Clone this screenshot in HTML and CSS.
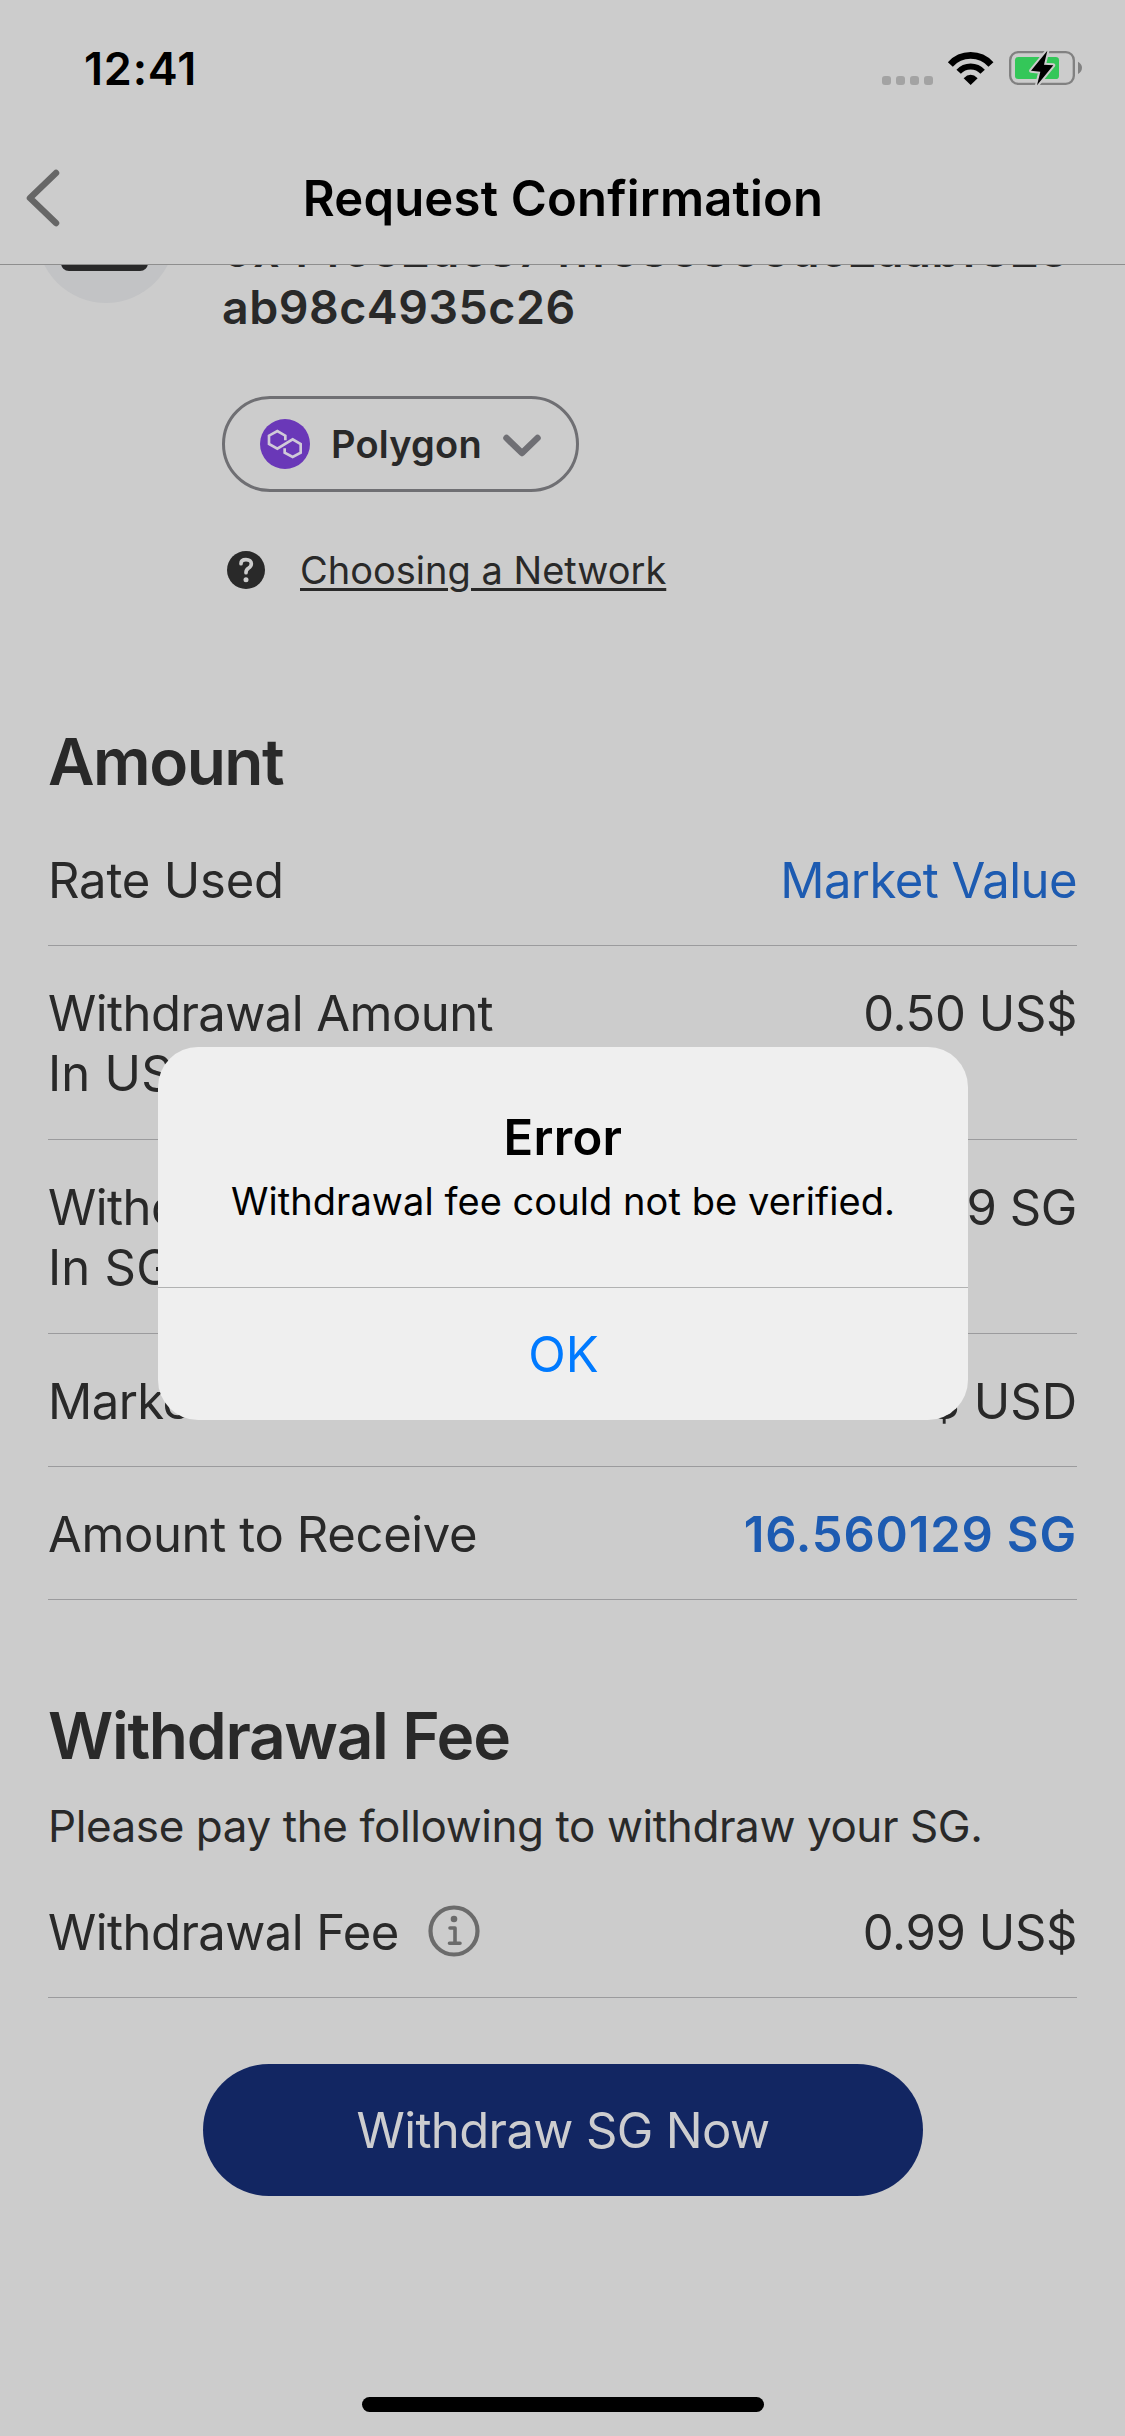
FILE: index.html
```html
<!DOCTYPE html>
<html lang="en">
<head>
<meta charset="utf-8">
<title>Request Confirmation</title>
<link rel="stylesheet" href="styles.css">
</head>
<body>
<div class="screen">
  <header class="header">
    <div class="status">
      <span class="time">12:41</span>
      <div class="status-icons">
        <span class="dots"><i></i><i></i><i></i><i></i></span>
        <svg class="wifi" viewBox="0 0 136 99" fill="none">
          <path d="M7 37.5A82 82 0 0 1 129 37.5" stroke="#000" stroke-width="20"/>
          <path d="M32 59A49 49 0 0 1 104 59" stroke="#000" stroke-width="18"/>
          <path d="M47 79Q68 58 89 79L68 99Z" fill="#000"/>
        </svg>
        <svg class="battery" viewBox="0 0 219 108">
          <rect x="3.5" y="6.5" width="191" height="95" rx="24" fill="none" stroke="#818181" stroke-width="7"/>
          <path d="M207 35Q219 42 219 53.500Q219 65 207 72Z" fill="#818181"/>
          <rect x="18" y="21" width="132" height="66" rx="10" fill="#34c759"/>
          <path d="M115 2L66 62L94 65L84 106L133 46L105 44Z" fill="#000" stroke="#ccc" stroke-width="12" stroke-linejoin="round" paint-order="stroke"/>
        </svg>
      </div>
    </div>
    <div class="navbar">
      <svg class="back" viewBox="0 0 36 60" fill="none" stroke="#666" stroke-width="6.500" stroke-linecap="round" stroke-linejoin="round"><path d="M30 5L4 30L30 55"/></svg>
      <h1 class="title">Request Confirmation</h1>
    </div>
  </header>

  <main class="content">
    <section class="wallet">
      <div class="avatar"><span class="card"></span></div>
      <div class="details">
        <p class="address">0x44c62dc874ff686866dc2aabf823<br>ab98c4935c26</p>
        <button class="network">
          <svg class="polygon" viewBox="0 0 150 150">
            <circle cx="75" cy="75" r="75" fill="#6a38b8"/>
            <path d="M76 64V50L52 36L27 50V75L52 89L98 61L122 75V101L98 114L74 101V88" fill="none" stroke="#d0cad8" stroke-width="8"/>
          </svg>
          <span>Polygon</span>
          <svg class="chevron" viewBox="0 0 38 23" fill="none" stroke="#6f6f74" stroke-width="6.500" stroke-linecap="round" stroke-linejoin="round"><path d="M3.500 4L19 19L34.500 4"/></svg>
        </button>
        <a class="help">
          <svg class="question" viewBox="0 0 114 114" fill="none">
            <circle cx="57" cy="57" r="57" fill="#292929"/>
            <path d="M42 38C42 30 48 26 57 26C67 26 73 31 73 38C73 45 70 48 64 52C59 55 57 58 57 65" stroke="#ccc" stroke-width="11" stroke-linecap="round"/>
            <circle cx="57" cy="86" r="7.500" fill="#ccc"/>
          </svg>
          <span>Choosing a Network</span>
        </a>
      </div>
    </section>

    <h2 class="heading amount">Amount</h2>
    <div class="row"><span class="rate">Rate Used</span><span class="value link">Market Value</span></div>
    <div class="row tall"><span>Withdrawal Amount<br><span class="unit">In US$</span></span><span class="value">0.50 US$</span></div>
    <div class="row tall"><span>Withdrawal Amount<br><span class="unit">In SG</span></span><span class="value">16.560129 SG</span></div>
    <div class="row"><span>Market Value</span><span class="value usd">0.030193 $ USD</span></div>
    <div class="row"><span class="receive">Amount to Receive</span><span class="value total">16.560129 SG</span></div>

    <h2 class="heading fee">Withdrawal Fee</h2>
    <p class="note">Please pay the following to withdraw your SG.</p>
    <div class="row">
      <span class="with-info">Withdrawal Fee
        <svg class="info" viewBox="0 0 52 52" fill="none" stroke="#6b6b6b">
          <circle cx="26" cy="26" r="23.500" stroke-width="4.200"/>
          <circle cx="26" cy="14" r="3.300" fill="#6b6b6b" stroke="none"/>
          <path d="M22 23H27V38M21.500 38.200H32" stroke-width="3.600" stroke-linecap="round" stroke-linejoin="round"/>
        </svg>
      </span>
      <span class="value">0.99 US$</span>
    </div>
    <button class="submit">Withdraw SG Now</button>
  </main>
  <div class="home"></div>

  <div class="alert">
    <h3 class="alert-title">Error</h3>
    <p class="alert-text">Withdrawal fee could not be verified.</p>
    <button class="alert-ok">OK</button>
  </div>
</div>
</body>
</html>
```
FILE: styles.css
```css
* { box-sizing: border-box; margin: 0; padding: 0; }
body { background: #ccc; }
svg { display: block; flex: none; overflow: visible; }
button { border: 0; background: none; color: inherit; font: inherit; letter-spacing: inherit; }

.screen {
  position: relative;
  display: flex;
  flex-direction: column;
  width: 1125px;
  height: 2436px;
  overflow: hidden;
  background: #ccc;
  color: #292929;
  font-family: Inter, "Liberation Sans", sans-serif;
}

/* Status bar and navigation */
.header { flex: none; height: 265px; border-bottom: 1px solid #8e8e8e; color: #000; }
.status { display: flex; justify-content: space-between; height: 132px; padding: 39px 43px 0 84px; }
.time { font-size: 45px; font-weight: 600; line-height: 60px; letter-spacing: 0.800px; }
.status-icons { display: flex; align-items: flex-start; }
.dots { display: flex; gap: 5px; margin-top: 37px; }
.dots i { width: 9px; height: 9px; border-radius: 3px; background: #a3a3a3; }
.wifi { width: 45.300px; height: 33px; margin: 13px 15.500px 0 15.300px; }
.battery { width: 73px; height: 36px; margin-top: 11px; }
.navbar { display: flex; align-items: center; height: 132px; padding-left: 26px; }
.back { width: 36px; height: 60px; }
.title { flex: 1; padding: 1px 61px 0 0; text-align: center; font-size: 49px; font-weight: 600; line-height: 60px; letter-spacing: 0.200px; }

/* Scrolled content */
.content { flex: 1; overflow: hidden; padding: 0 48px; }
.wallet { display: flex; gap: 47px; margin-top: -100px; margin-left: -11px; }
.avatar { display: flex; flex: none; align-items: center; justify-content: center; width: 138px; height: 138px; border-radius: 50%; background: #c2c3c5; }
.card { width: 87px; height: 73px; margin-right: 4px; border-radius: 8px; background: #29292a; }
.details { display: flex; flex-direction: column; align-items: flex-start; padding-top: 57px; }
.address { white-space: nowrap; font-size: 46.500px; font-weight: 600; line-height: 57px; letter-spacing: 0.500px; }
.network { display: flex; align-items: center; width: 357px; height: 96px; margin-top: 60px; padding-left: 35px; border: 3px solid #6f6f73; border-radius: 48px; font-size: 38px; font-weight: 600; letter-spacing: 0.200px; }
.polygon { width: 50px; height: 50px; margin-right: 21px; }
.chevron { width: 38px; height: 23px; margin-left: 21px; margin-top: 2px; }
.help { display: flex; align-items: center; gap: 35px; margin-top: 54px; padding-left: 5px; font-size: 38px; line-height: 48px; }
.help span { text-decoration: underline; text-decoration-thickness: 3px; text-underline-offset: 4px; }
.question { width: 38px; height: 38px; }

.heading { font-size: 64px; font-weight: 600; line-height: 80px; letter-spacing: -1.300px; }
.amount { margin-top: 128px; margin-bottom: 11px; letter-spacing: -1.500px; }
.fee { margin-top: 96px; }
.note { margin: 22px 0 11px; font-size: 44px; line-height: 56px; letter-spacing: -0.420px; }

.row { display: flex; justify-content: space-between; height: 133px; padding-top: 38px; border-bottom: 1px solid #9b9b9d; font-size: 49px; line-height: 60px; letter-spacing: -0.550px; }
.tall { height: 194px; }
.rate { letter-spacing: -0.200px; }
.unit { letter-spacing: 0.200px; }
.receive { letter-spacing: -0.370px; }
.value { letter-spacing: -0.400px; }
.usd { letter-spacing: 0; }
.link { color: #1d5bb1; letter-spacing: -0.550px; }
.total { color: #1d5bb1; font-weight: 600; letter-spacing: 0.800px; }
.with-info { display: flex; gap: 29px; }
.info { width: 52px; height: 52px; margin-top: 2px; }
.submit { display: block; width: 720px; height: 132px; margin: 66px auto 0; padding: 1px 0 0 1px; border-radius: 66px; background: #122662; color: #cdcdcf; font-size: 49px; letter-spacing: -0.630px; }
.home { flex: none; width: 402px; height: 15px; margin: 0 auto 24px; border-radius: 8px; background: #000; }

/* Dialog */
.alert { position: absolute; top: 1047px; left: 158px; width: 810px; height: 373px; border-radius: 40px; background: #efefef; color: #000; text-align: center; }
.alert-title { padding-top: 61px; font-size: 49px; font-weight: 600; line-height: 60px; letter-spacing: 0.300px; }
.alert-text { height: 119px; padding-top: 3px; font-size: 38px; line-height: 60px; letter-spacing: 0.060px; }
.alert-ok { display: block; width: 100%; height: 133px; padding-left: 1px; border-top: 1px solid #b1b2b2; color: #007aff; font-size: 49px; }
```
